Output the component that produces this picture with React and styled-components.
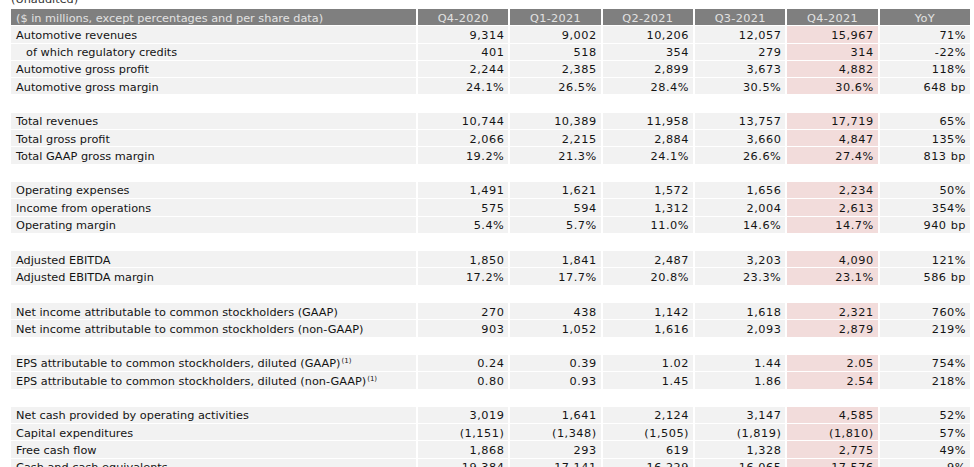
import styled, { createGlobalStyle } from 'styled-components';

const GlobalStyle = createGlobalStyle`
    html, body {
        margin: 0;
        padding: 0;
        background: #ffffff;
        overflow: hidden;
    }
    body {
        font-family: "DejaVu Sans", "Liberation Sans", sans-serif;
        color: #141414;
    }
`;

const Page = styled.div`
    width: 974px;
    height: 467px;
    padding: 0 4px 0 11px;
    box-sizing: border-box;
    overflow: hidden;
`;

const Caption = styled.div`
    height: 9px;
    font-size: 11.3px;
    color: #333;
    overflow: hidden;
    display: flex;
    align-items: flex-end;
    span {
        line-height: 12px;
        margin-bottom: 3px;
    }
`;

const Table = styled.div`
    display: flex;
    flex-direction: column;
    gap: 1px;
`;

const Row = styled.div`
    display: grid;
    grid-template-columns: 405px repeat(6, 1fr);
    column-gap: 2px;
    height: 16.3px;
`;

const Spacer = styled.div`
    height: 16.3px;
`;

const Cell = styled.div`
    box-sizing: border-box;
    height: 16.3px;
    font-size: 11.3px;
    line-height: 16.3px;
    padding-top: 1.5px;
    white-space: nowrap;
`;

const HeadCell = styled(Cell)`
    background: #7f7f7f;
    color: #e2e2e2;
    text-align: ${p => (p.$left ? 'left' : 'center')};
    letter-spacing: ${p => (p.$left ? '0' : '0.3px')};
    padding-left: 5px;
    padding-right: 5px;
`;

const Label = styled(Cell)`
    background: #f2f2f2;
    padding-left: ${p => (p.$indent ? '15px' : '5px')};
`;

const Num = styled(Cell)`
    background: ${p => (p.$hot ? '#f2dcdb' : '#f2f2f2')};
    letter-spacing: 0.5px;
    text-align: right;
    padding-right: 4px;
`;

const Note = styled.sup`
    font-size: 7px;
    vertical-align: 4px;
    line-height: 0;
    margin-left: 1px;
`;

const quarters = ['Q4-2020', 'Q1-2021', 'Q2-2021', 'Q3-2021', 'Q4-2021', 'YoY'];

const groups = [
    [
        ['Automotive revenues', '9,314', '9,002', '10,206', '12,057', '15,967', '71%'],
        ['of which regulatory credits', '401', '518', '354', '279', '314', '-22%', 'indent'],
        ['Automotive gross profit', '2,244', '2,385', '2,899', '3,673', '4,882', '118%'],
        ['Automotive gross margin', '24.1%', '26.5%', '28.4%', '30.5%', '30.6%', '648 bp'],
    ],
    [
        ['Total revenues', '10,744', '10,389', '11,958', '13,757', '17,719', '65%'],
        ['Total gross profit', '2,066', '2,215', '2,884', '3,660', '4,847', '135%'],
        ['Total GAAP gross margin', '19.2%', '21.3%', '24.1%', '26.6%', '27.4%', '813 bp'],
    ],
    [
        ['Operating expenses', '1,491', '1,621', '1,572', '1,656', '2,234', '50%'],
        ['Income from operations', '575', '594', '1,312', '2,004', '2,613', '354%'],
        ['Operating margin', '5.4%', '5.7%', '11.0%', '14.6%', '14.7%', '940 bp'],
    ],
    [
        ['Adjusted EBITDA', '1,850', '1,841', '2,487', '3,203', '4,090', '121%'],
        ['Adjusted EBITDA margin', '17.2%', '17.7%', '20.8%', '23.3%', '23.1%', '586 bp'],
    ],
    [
        ['Net income attributable to common stockholders (GAAP)', '270', '438', '1,142', '1,618', '2,321', '760%'],
        ['Net income attributable to common stockholders (non-GAAP)', '903', '1,052', '1,616', '2,093', '2,879', '219%'],
    ],
    [
        ['EPS attributable to common stockholders, diluted (GAAP)', '0.24', '0.39', '1.02', '1.44', '2.05', '754%', 'note'],
        ['EPS attributable to common stockholders, diluted (non-GAAP)', '0.80', '0.93', '1.45', '1.86', '2.54', '218%', 'note'],
    ],
    [
        ['Net cash provided by operating activities', '3,019', '1,641', '2,124', '3,147', '4,585', '52%'],
        ['Capital expenditures', '(1,151)', '(1,348)', '(1,505)', '(1,819)', '(1,810)', '57%'],
        ['Free cash flow', '1,868', '293', '619', '1,328', '2,775', '49%'],
        ['Cash and cash equivalents', '19,384', '17,141', '16,229', '16,065', '17,576', '-9%'],
    ],
];

const DataRow = ({ row }) => {
    const [label, ...rest] = row;
    const values = rest.slice(0, 6);
    const flag = rest[6];
    return (
        <Row>
            <Label $indent={flag === 'indent'}>
                {label}
                {flag === 'note' && <Note>(1)</Note>}
            </Label>
            {values.map((v, i) => (
                <Num key={i} $hot={i === 4}>{v}</Num>
            ))}
        </Row>
    );
};

const App = () => {
    return (
        <>
            <GlobalStyle />
            <Page>
                <Caption><span>(Unaudited)</span></Caption>
                <Table>
                    <Row>
                        <HeadCell $left>($ in millions, except percentages and per share data)</HeadCell>
                        {quarters.map(q => (
                            <HeadCell key={q}>{q}</HeadCell>
                        ))}
                    </Row>
                    {groups.map((g, gi) => (
                        <Table key={gi}>
                            {gi > 0 && <Spacer />}
                            {g.map((r, ri) => (
                                <DataRow key={ri} row={r} />
                            ))}
                        </Table>
                    ))}
                </Table>
            </Page>
        </>
    );
};

export default App;
